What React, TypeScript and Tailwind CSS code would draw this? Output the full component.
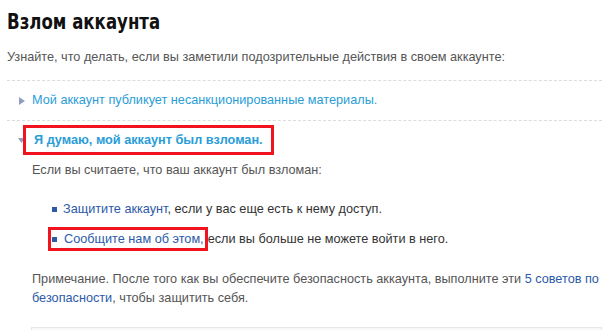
import React from 'react';

const Arrow: React.FC<{ open?: boolean }> = ({ open }) => (
  <svg width="7" height="8" viewBox="0 0 7 8" className="shrink-0">
    {open ? (
      <polygon points="0,2 7,2 3.5,7" fill="#8f9ec4" />
    ) : (
      <polygon points="1,0 7,4 1,8" fill="#8f9ec4" />
    )}
  </svg>
);

export default function App() {
  return (
    <div
      className="w-[602px] h-[330px] overflow-hidden bg-white text-[12.7px] text-[#555]"
      style={{ fontFamily: '"Liberation Sans", Arial, sans-serif' }}
    >
      <div className="pl-[7px] pt-[10px]">
        {/* heading is a narrow bold face in the original, squeeze it */}
        <h1
          className="w-max origin-left scale-x-[0.79] text-[21px] font-bold leading-[24px] text-[#111]"
          style={{ fontFamily: '"DejaVu Sans", "Liberation Sans", sans-serif' }}
        >
          Взлом аккаунта
        </h1>
        <p className="mt-[15px] leading-[16px]">
          Узнайте, что делать, если вы заметили подозрительные действия в своем аккаунте:
        </p>

        <div className="mt-[15px] border-t border-dashed border-[#dcdcdc]" />
        <div className="flex items-center h-[39px] pl-[11px] gap-[7px]">
          <Arrow />
          <span className="text-[#2a9dd8]">Мой аккаунт публикует несанкционированные материалы.</span>
        </div>
        <div className="border-t border-dashed border-[#dcdcdc]" />

        <div className="flex items-center pt-[4px] pl-[11px] gap-[7px]">
          <Arrow open />
          <span className="-ml-[9px] px-[8px] py-[5px] border-[3px] border-[#f0141e] font-bold text-[#2a9dd8] leading-[14px]">
            Я думаю, мой аккаунт был взломан.
          </span>
        </div>

        <div className="pl-[25px] text-[#333]">
          <p className="mt-[7px] leading-[16px] text-[#555]">Если вы считаете, что ваш аккаунт был взломан:</p>
          <ul className="mt-[23px] ml-[20px] flex flex-col gap-[14px]">
            <li className="flex items-center gap-[6px] leading-[16px]">
              <span className="w-[5px] h-[5px] bg-[#2c5aa8] shrink-0" />
              <span>
                <span className="text-[#2c5aa8]">Защитите аккаунт</span>, если у вас еще есть к нему доступ.
              </span>
            </li>
            <li className="flex items-center gap-[6px] leading-[16px]">
              <span className="w-[5px] h-[5px] bg-[#2c5aa8] shrink-0" />
              <span>
                <span className="-ml-[15px] pl-[13px] pr-[1px] py-[2px] border-[3px] border-[#f0141e] text-[#2c5aa8]">
                  Сообщите нам об этом,
                </span>
                если вы больше не можете войти в него.
              </span>
            </li>
          </ul>
          <p className="mt-[23px] leading-[19px] text-[#555] pr-[2px]">
            Примечание. После того как вы обеспечите безопасность аккаунта, выполните эти{' '}
            <span className="text-[#2c5aa8]">5 советов по безопасности</span>, чтобы защитить себя.
          </p>
          <div className="mt-[19px] -ml-[1px] h-[20px] bg-[#f7f7f7] border border-[#e6e6e6]" />
        </div>
      </div>
    </div>
  );
}
